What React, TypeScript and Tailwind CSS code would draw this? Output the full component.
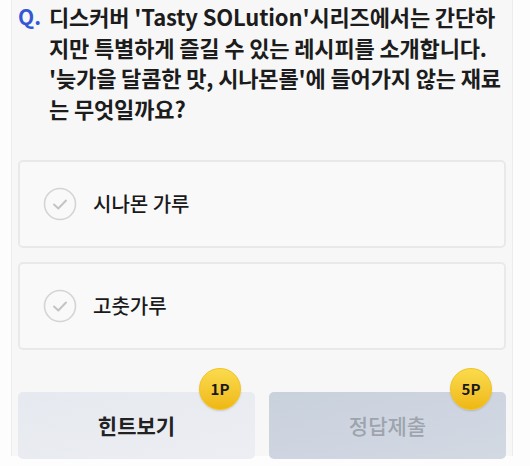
import React from "react";

function CheckCircle() {
  return (
    <svg width="34" height="34" viewBox="0 0 34 34" className="shrink-0">
      <circle cx="17" cy="17" r="15.5" fill="none" stroke="#d4d4d4" strokeWidth="1.6" />
      <path d="M11 17.5 L15.3 21.5 L23 13.5" fill="none" stroke="#c4c4c4" strokeWidth="2" strokeLinecap="round" strokeLinejoin="round" />
    </svg>
  );
}

function Option({ label }: { label: string }) {
  return (
    <div className="h-[88px] rounded-[5px] border-2 border-[#e9e9e9] bg-[#f9f9f9] flex items-center pl-[23px] gap-[16px]">
      <CheckCircle />
      <span className="text-[20px] text-[#1a1a1a] font-medium">{label}</span>
    </div>
  );
}

function Badge({ text }: { text: string }) {
  return (
    <div className="absolute -top-[24px] w-[42px] h-[42px] rounded-full bg-gradient-to-b from-[#fadb4c] to-[#efb80f] border border-[#f3c31a] shadow-[0_1px_2px_rgba(0,0,0,0.15)] flex items-center justify-center">
      <span className="text-[15px] font-bold text-[#1a1a1a]">{text}</span>
    </div>
  );
}

export default function App() {
  return (
    <div
      className="w-[530px] h-[466px] bg-[#fdfdfd] overflow-hidden"
      style={{ fontFamily: '"Noto Sans CJK KR", "Noto Sans", sans-serif' }}
    >
      <div className="ml-[11px] w-[502px] h-[456px] bg-[#f7f7f7] border-l border-[#ececec] border-r flex flex-col">
        <div className="flex pl-[6px] pt-[1px] leading-[30.5px]">
          <span className="w-[31px] text-[21px] font-bold text-[#3457d5]">Q.</span>
          <p className="text-[22px] font-bold text-[#1c1c1c] tracking-[-0.15px] whitespace-nowrap">
            디스커버 'Tasty SOLution'시리즈에서는 간단하
            <br />
            지만 특별하게 즐길 수 있는 레시피를 소개합니다.
            <br />
            '늦가을 달콤한 맛, 시나몬롤'에 들어가지 않는 재료
            <br />는 무엇일까요?
          </p>
        </div>
        <div className="mt-[37px] mx-[6px] flex flex-col gap-[14px]">
          <Option label="시나몬 가루" />
          <Option label="고춧가루" />
        </div>
        <div className="mt-[42px] mx-[6px] flex gap-[14px]">
          <div className="relative flex-1 h-[67px] rounded-[5px] bg-gradient-to-br from-[#e6e9ef] to-[#eceef3] flex items-center justify-center">
            <span className="text-[21px] font-bold text-[#222]">힌트보기</span>
            <div className="absolute right-[14px] top-0">
              <div className="relative w-[42px]">
                <Badge text="1P" />
              </div>
            </div>
          </div>
          <div className="relative flex-1 h-[67px] rounded-[5px] bg-gradient-to-br from-[#c9d1dd] to-[#d3d9e3] flex items-center justify-center">
            <span className="text-[21px] font-medium text-[#9da4ad]">정답제출</span>
            <div className="absolute right-[14px] top-0">
              <div className="relative w-[42px]">
                <Badge text="5P" />
              </div>
            </div>
          </div>
        </div>
      </div>
    </div>
  );
}
